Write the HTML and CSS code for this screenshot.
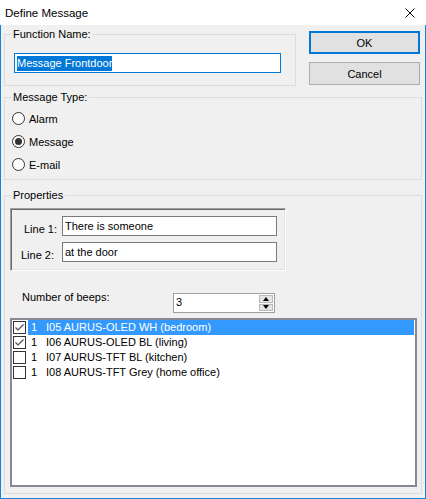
FILE: index.html
```html
<!DOCTYPE html>
<html lang="en">
<head>
    <meta charset="UTF-8">
    <title>Define Message</title>
    <link rel="stylesheet" href="styles.css">
</head>
<body>
<div class="window">
    <div class="titlebar">
        <span class="title">Define Message</span>
        <svg class="close" width="10" height="10" viewBox="0 0 10 10">
            <path d="M0.5 0.5L9.5 9.5M9.5 0.5L0.5 9.5" stroke="#000" stroke-width="1" fill="none"/>
        </svg>
    </div>
    <div class="client">
        <div class="top-row">
            <fieldset class="group group-name">
                <legend>Function Name:</legend>
                <div class="edit edit-focus"><span class="sel">Message Frontdoor</span></div>
            </fieldset>
            <div class="buttons">
                <button class="btn btn-default">OK</button>
                <button class="btn">Cancel</button>
            </div>
        </div>

        <fieldset class="group group-type">
            <legend>Message Type:</legend>
            <div class="radio"><span class="radio-box"></span>Alarm</div>
            <div class="radio"><span class="radio-box checked"></span>Message</div>
            <div class="radio"><span class="radio-box"></span>E-mail</div>
        </fieldset>

        <fieldset class="group group-props">
            <legend>Properties</legend>
            <div class="panel">
                <span class="line-label">Line 1:</span>
                <div class="edit">There is someone</div>
                <span class="line-label line-label-2">Line 2:</span>
                <div class="edit">at the door</div>
            </div>

            <div class="beeps-row">
                <span class="beeps-label">Number of beeps:</span>
                <div class="spin">
                    <span class="spin-value">3</span>
                    <div class="spin-btns">
                        <span class="spin-btn"><i class="arrow-up"></i></span>
                        <span class="spin-btn"><i class="arrow-down"></i></span>
                    </div>
                </div>
            </div>

            <div class="listbox">
                <div class="item">
                    <span class="check"><svg width="11" height="11" viewBox="0 0 11 11"><path d="M1.5 5.5L4 8L9.5 2.5" stroke="#4d4d4d" stroke-width="1.2" fill="none"/></svg></span>
                    <span class="item-text selected"><span class="num">1</span>I05 AURUS-OLED WH (bedroom)</span>
                </div>
                <div class="item">
                    <span class="check"><svg width="11" height="11" viewBox="0 0 11 11"><path d="M1.5 5.5L4 8L9.5 2.5" stroke="#4d4d4d" stroke-width="1.2" fill="none"/></svg></span>
                    <span class="item-text"><span class="num">1</span>I06 AURUS-OLED BL (living)</span>
                </div>
                <div class="item">
                    <span class="check"></span>
                    <span class="item-text"><span class="num">1</span>I07 AURUS-TFT BL (kitchen)</span>
                </div>
                <div class="item">
                    <span class="check"></span>
                    <span class="item-text"><span class="num">1</span>I08 AURUS-TFT Grey (home office)</span>
                </div>
            </div>
        </fieldset>
    </div>
</div>
</body>
</html>
```

FILE: styles.css
```css
* {
    box-sizing: border-box;
}
body {
    margin: 0;
    font-family: "Liberation Sans", Arial, sans-serif;
    font-size: 11px;
    color: #000;
    background: #fff;
}
.window {
    width: 426px;
    height: 499px;
    display: flex;
    flex-direction: column;
}
.titlebar {
    height: 25px;
    flex: none;
    display: flex;
    align-items: center;
    justify-content: space-between;
    padding: 0 11px 0 5px;
    background: #fff;
}
.title {
    font-size: 11.5px;
}
.close {
    display: block;
    margin-top: 1px;
}
.client {
    flex: 1;
    background: #f0f0f0;
    border: 1px solid #1783d9;
    border-top: 0;
    padding: 3px 3px 4px;
    display: flex;
    flex-direction: column;
}

/* group boxes: caption sits 8px in from the frame */
.group {
    margin: 0;
    border: 1px solid #dcdcdc;
    min-width: 0;
}
.group legend {
    padding: 0 2px;
    line-height: 13px;
}
.top-row {
    display: flex;
    gap: 13px;
    align-items: flex-start;
}
.group-name {
    width: 292px;
    padding: 12px 9px;
}
.group-name legend {
    margin-left: -3px;
}
.group-type {
    margin-top: 5px;
    padding: 3px 7px;
}
.group-type legend {
    margin-left: -1px;
}
.group-props {
    margin-top: 9px;
    padding: 6px 4px 6px 5px;
}
.group-props legend {
    margin-left: 1px;
}

/* buttons */
.buttons {
    width: 111px;
    display: flex;
    flex-direction: column;
    gap: 8px;
    padding-top: 3px;
}
.btn {
    height: 23px;
    padding: 0;
    background: #e1e1e1;
    border: 1px solid #adadad;
    font: inherit;
    color: #000;
}
.btn-default {
    border: 2px solid #0078d7;
}

/* text boxes */
.edit {
    height: 20px;
    border: 1px solid #7a7a7a;
    background: #fff;
    padding: 0 2px;
    line-height: 18px;
    white-space: nowrap;
}
.edit-focus {
    width: 267px;
    border-color: #0078d7;
    display: flex;
    align-items: center;
}
.sel {
    background: #0078d7;
    color: #fff;
    line-height: 15px;
}

/* radio buttons */
.radio {
    display: flex;
    align-items: center;
    gap: 4px;
    height: 23px;
}
.radio-box {
    width: 13px;
    height: 13px;
    border: 1px solid #333;
    border-radius: 50%;
    background: #fff;
    display: flex;
    align-items: center;
    justify-content: center;
}
.radio-box.checked::after {
    content: "";
    width: 7px;
    height: 7px;
    border-radius: 50%;
    background: #333;
}

/* sunken panel with the two lines */
.panel {
    width: 276px;
    display: grid;
    grid-template-columns: 50px 215px;
    row-gap: 6px;
    padding: 7px 8px 8px 1px;
    border: 1px solid;
    border-color: #a0a0a0 #fff #fff #a0a0a0;
    box-shadow: inset 1px 1px 0 #696969, inset -1px -1px 0 #e3e3e3;
}
.line-label {
    align-self: end;
    line-height: 13px;
    text-align: right;
    padding-right: 5px;
}
.line-label-2 {
    padding-right: 8px;
}

/* number of beeps */
.beeps-row {
    display: flex;
    align-items: flex-start;
    margin-top: 22px;
    padding-left: 12px;
}
.beeps-label {
    width: 151px;
    line-height: 13px;
    margin-top: -2px;
}
.spin {
    width: 102px;
    height: 20px;
    display: flex;
    border: 1px solid #a0a0a0;
    background: #fff;
}
.spin-value {
    flex: 1;
    padding-left: 2px;
    line-height: 16px;
}
.spin-btns {
    width: 15px;
    display: flex;
    flex-direction: column;
    padding: 1px 1px 1px 0;
    gap: 1px;
}
.spin-btn {
    flex: 1;
    display: flex;
    align-items: center;
    justify-content: center;
    background: #e5e5e5;
    border: 1px solid #b9b9b9;
}
.arrow-up,
.arrow-down {
    width: 0;
    height: 0;
    border-left: 3.5px solid transparent;
    border-right: 3.5px solid transparent;
}
.arrow-up {
    border-bottom: 4px solid #000;
}
.arrow-down {
    border-top: 4px solid #000;
}

/* check list */
.listbox {
    margin-top: 5px;
    height: 169px;
    border: 2px solid #868892;
    background: #fff;
}
.item {
    display: flex;
    align-items: center;
    height: 15px;
}
.check {
    width: 13px;
    height: 13px;
    margin-left: 1px;
    border: 1px solid #333;
    background: #fff;
    display: flex;
    align-items: center;
    justify-content: center;
}
.check svg {
    display: block;
}
.item-text {
    flex: 1;
    margin: 0 1px 0 2px;
    padding-left: 3px;
    line-height: 15px;
    white-space: nowrap;
}
.item-text.selected {
    background: #3399ff;
    color: #fff;
}
.num {
    display: inline-block;
    width: 15px;
}
```
